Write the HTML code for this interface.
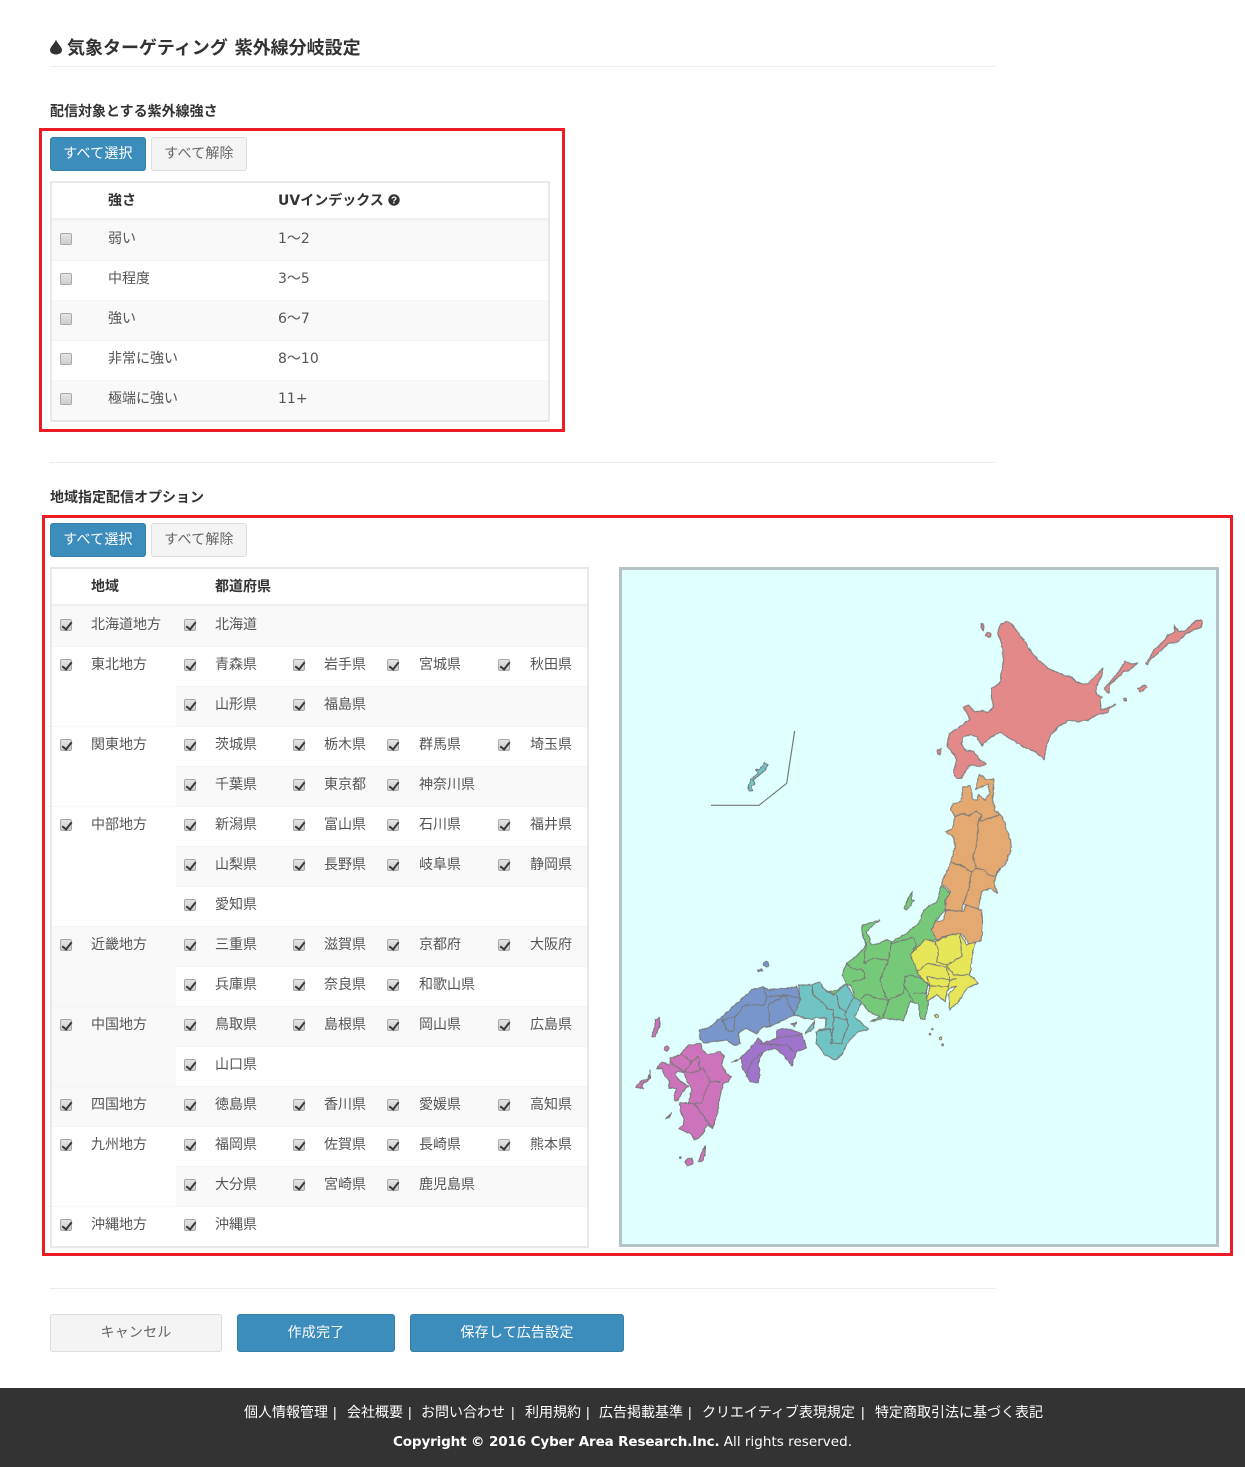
<!DOCTYPE html>
<html lang="ja"><head><meta charset="utf-8"><title>紫外線分岐設定</title>
<style>
*{box-sizing:border-box}
html,body{margin:0;padding:0;background:#fff}
body{position:relative;width:1245px;height:1467px;overflow:hidden;font:14px/20px "Liberation Sans","Noto Sans CJK JP",sans-serif;color:#555}
.a{position:absolute;white-space:nowrap}
.hr{position:absolute;left:50px;width:946px;height:1px;background:#eee}
.h{font-weight:700;color:#333}
.b{position:absolute;height:34px;line-height:31px;text-align:center;border-radius:3px;border:1px solid #367fa9;background:#3c8dbc;color:#fff;letter-spacing:.2px}
.g{background:#f4f4f4;border-color:#ddd;color:#666}
.red{position:absolute;border:3px solid #ed1c24}
table{position:absolute;border-collapse:separate;border-spacing:0;table-layout:fixed;border:2px solid #e8e8e8;background:#fff}
td,th{height:40px;padding:0 0 6px 10px;border-top:1px solid #f4f4f4;text-align:left;vertical-align:middle;white-space:nowrap;font-weight:400;overflow:hidden}
th{height:37px;border-top:0;border-bottom:2px solid #f0f0f0;font-weight:700;color:#333;padding-bottom:1px}
td.k{padding:0 0 3px 8px;vertical-align:middle}
td.n{font-family:"DejaVu Sans","Noto Sans CJK JP",sans-serif;padding-bottom:4px}
tr.s td{background:#f9f9f9}
i.c{display:block;position:relative;width:12px;height:12px;border:1px solid #a8a8a8;border-radius:2px;background:linear-gradient(#e4e4e4,#cfcfcf)}
i.y::after{content:"";position:absolute;left:3px;top:0;width:4px;height:8px;border:solid #3a3a3a;border-width:0 2px 2px 0;transform:rotate(38deg)}
#foot{position:absolute;left:0;top:1388px;width:1245px;height:79px;background:#333;color:#fff}
#foot span{position:absolute;top:14px;white-space:nowrap}
#foot span span{position:static}
</style></head><body>

<svg class="a" style="left:49px;top:39px" width="14" height="16" viewBox="0 0 14 16"><path d="M7 .5C6 4.500 1 7.500 1 11c0 2.700 2.700 4.500 6 4.500s6-1.800 6-4.500C13 7.500 8 4.500 7 .5Z" fill="#333"/></svg>
<div class="a h" style="left:67px;top:36px;font-size:18px;line-height:24px;word-spacing:2px;letter-spacing:-.02px">気象ターゲティング 紫外線分岐設定</div>
<div class="hr" style="top:66px"></div>

<div class="a h" style="left:50px;top:101px">配信対象とする紫外線強さ</div>
<div class="red" style="left:39px;top:128px;width:526px;height:304px"></div>
<div class="b" style="left:50px;top:137px;width:96px">すべて選択</div>
<div class="b g" style="left:151px;top:137px;width:96px">すべて解除</div>

<table style="left:50px;top:181px;width:500px">
<colgroup><col style="width:46px"><col style="width:170px"><col></colgroup>
<tr><th style="padding:0"></th><th>強さ</th><th><span style="font-family:'DejaVu Sans',sans-serif">UV</span>インデックス <svg width="12" height="12" viewBox="0 0 12 12" style="vertical-align:-1px"><circle cx="6" cy="6" r="5.700" fill="#333"/><text x="6" y="9.500" font-size="10" font-weight="700" fill="#fff" text-anchor="middle" font-family="Liberation Sans">?</text></svg></th></tr>
<tr class="s"><td class="k"><i class="c"></i></td><td>弱い</td><td class="n">1～2</td></tr>
<tr><td class="k"><i class="c"></i></td><td>中程度</td><td class="n">3～5</td></tr>
<tr class="s"><td class="k"><i class="c"></i></td><td>強い</td><td class="n">6～7</td></tr>
<tr><td class="k"><i class="c"></i></td><td>非常に強い</td><td class="n">8～10</td></tr>
<tr class="s"><td class="k"><i class="c"></i></td><td>極端に強い</td><td class="n">11+</td></tr>
</table>

<div class="hr" style="top:462px"></div>
<div class="a h" style="left:50px;top:487px">地域指定配信オプション</div>
<div class="red" style="left:42px;top:515px;width:1191px;height:741px"></div>
<div class="b" style="left:50px;top:523px;width:96px">すべて選択</div>
<div class="b g" style="left:151px;top:523px;width:96px">すべて解除</div>

<table style="left:50px;top:567px;width:539px">
<colgroup><col style="width:29px"><col style="width:95px"><col style="width:29px"><col style="width:80px"><col style="width:29px"><col style="width:65px"><col style="width:30px"><col style="width:81px"><col style="width:30px"><col></colgroup>
<tr><th style="padding:0"></th><th>地域</th><th style="padding:0"></th><th colspan="7">都道府県</th></tr>
<tr class="s"><td class="k"><i class="c y"></i></td><td>北海道地方</td><td class="k"><i class="c y"></i></td><td colspan="7">北海道</td></tr>

<tr><td class="k" rowspan="2" style="vertical-align:top;padding-top:12px"><i class="c y"></i></td><td rowspan="2" style="vertical-align:top;padding-top:7px">東北地方</td><td class="k"><i class="c y"></i></td><td>青森県</td><td class="k"><i class="c y"></i></td><td>岩手県</td><td class="k"><i class="c y"></i></td><td>宮城県</td><td class="k"><i class="c y"></i></td><td>秋田県</td></tr>
<tr class="s"><td class="k"><i class="c y"></i></td><td>山形県</td><td class="k"><i class="c y"></i></td><td>福島県</td><td></td><td></td><td></td><td></td></tr>

<tr><td class="k" rowspan="2" style="vertical-align:top;padding-top:12px"><i class="c y"></i></td><td rowspan="2" style="vertical-align:top;padding-top:7px">関東地方</td><td class="k"><i class="c y"></i></td><td>茨城県</td><td class="k"><i class="c y"></i></td><td>栃木県</td><td class="k"><i class="c y"></i></td><td>群馬県</td><td class="k"><i class="c y"></i></td><td>埼玉県</td></tr>
<tr class="s"><td class="k"><i class="c y"></i></td><td>千葉県</td><td class="k"><i class="c y"></i></td><td>東京都</td><td class="k"><i class="c y"></i></td><td>神奈川県</td><td></td><td></td></tr>

<tr><td class="k" rowspan="3" style="vertical-align:top;padding-top:12px"><i class="c y"></i></td><td rowspan="3" style="vertical-align:top;padding-top:7px">中部地方</td><td class="k"><i class="c y"></i></td><td>新潟県</td><td class="k"><i class="c y"></i></td><td>富山県</td><td class="k"><i class="c y"></i></td><td>石川県</td><td class="k"><i class="c y"></i></td><td>福井県</td></tr>
<tr class="s"><td class="k"><i class="c y"></i></td><td>山梨県</td><td class="k"><i class="c y"></i></td><td>長野県</td><td class="k"><i class="c y"></i></td><td>岐阜県</td><td class="k"><i class="c y"></i></td><td>静岡県</td></tr>
<tr><td class="k"><i class="c y"></i></td><td>愛知県</td><td></td><td></td><td></td><td></td><td></td><td></td></tr>

<tr class="s"><td class="k" rowspan="2" style="vertical-align:top;padding-top:12px"><i class="c y"></i></td><td rowspan="2" style="vertical-align:top;padding-top:7px">近畿地方</td><td class="k"><i class="c y"></i></td><td>三重県</td><td class="k"><i class="c y"></i></td><td>滋賀県</td><td class="k"><i class="c y"></i></td><td>京都府</td><td class="k"><i class="c y"></i></td><td>大阪府</td></tr>
<tr><td class="k"><i class="c y"></i></td><td>兵庫県</td><td class="k"><i class="c y"></i></td><td>奈良県</td><td class="k"><i class="c y"></i></td><td>和歌山県</td><td></td><td></td></tr>

<tr class="s"><td class="k" rowspan="2" style="vertical-align:top;padding-top:12px"><i class="c y"></i></td><td rowspan="2" style="vertical-align:top;padding-top:7px">中国地方</td><td class="k"><i class="c y"></i></td><td>鳥取県</td><td class="k"><i class="c y"></i></td><td>島根県</td><td class="k"><i class="c y"></i></td><td>岡山県</td><td class="k"><i class="c y"></i></td><td>広島県</td></tr>
<tr><td class="k"><i class="c y"></i></td><td>山口県</td><td></td><td></td><td></td><td></td><td></td><td></td></tr>

<tr class="s"><td class="k"><i class="c y"></i></td><td>四国地方</td><td class="k"><i class="c y"></i></td><td>徳島県</td><td class="k"><i class="c y"></i></td><td>香川県</td><td class="k"><i class="c y"></i></td><td>愛媛県</td><td class="k"><i class="c y"></i></td><td>高知県</td></tr>

<tr><td class="k" rowspan="2" style="vertical-align:top;padding-top:12px"><i class="c y"></i></td><td rowspan="2" style="vertical-align:top;padding-top:7px">九州地方</td><td class="k"><i class="c y"></i></td><td>福岡県</td><td class="k"><i class="c y"></i></td><td>佐賀県</td><td class="k"><i class="c y"></i></td><td>長崎県</td><td class="k"><i class="c y"></i></td><td>熊本県</td></tr>
<tr class="s"><td class="k"><i class="c y"></i></td><td>大分県</td><td class="k"><i class="c y"></i></td><td>宮崎県</td><td class="k"><i class="c y"></i></td><td>鹿児島県</td><td></td><td></td></tr>

<tr><td class="k"><i class="c y"></i></td><td>沖縄地方</td><td class="k"><i class="c y"></i></td><td colspan="7">沖縄県</td></tr>
</table>

<div class="a" style="left:619px;top:567px;width:600px;height:680px;background:#e0ffff;border:3px solid #b4c4c4"></div>
<svg class="a" style="left:0;top:0" width="1245" height="1467" viewBox="0 0 1245 1467" stroke="#777" stroke-linejoin="round">
<defs><filter id="r" filterUnits="userSpaceOnUse" x="620" y="600" width="596" height="600"><feTurbulence type="fractalNoise" baseFrequency=".22" numOctaves="2" seed="4"/><feDisplacementMap in="SourceGraphic" scale="2.500" xChannelSelector="R" yChannelSelector="G"/></filter></defs>
<g transform="translate(700 720) scale(.3333)">
<path d="M33 256H177L260 190L284 33" fill="none" stroke-width="3.500"/>
</g>
<g filter="url(#r)">
<g transform="translate(700 720) scale(.3333)">
<path d="M195 128L203 135L195 150L180 165L165 175L160 180L165 190L155 200L158 212L148 213L145 200L155 175L175 160L165 150L178 148Z" fill="#70c4c4" stroke-width="3"/>
</g>
<g transform="translate(920 600) scale(.3333)" stroke-width="3">
<g fill="#e38989">
<path d="M263 63L285 85L318 130L345 170L385 205L430 225L458 232L470 247L502 252L530 225L549 203L545 225L528 262L530 283L548 293L540 300L545 330L565 322L588 313L570 325L562 338L530 345L505 360L470 365L445 362L415 380L390 410L378 445L373 478L350 458L310 440L265 412L240 398L215 410L185 436L170 410L150 404L130 412L123 430L135 450L160 455L180 480L200 492L178 500L150 495L135 515L125 535L108 535L100 515L110 480L100 460L82 440L88 400L120 380L150 357L130 322L145 315L165 335L185 332L205 338L220 320L215 285L215 265L240 250L250 180L245 130L233 100L240 75Z"/>
<path d="M555 265L575 240L600 210L615 183L635 192L652 190L630 210L610 215L590 235L570 255L567 280L555 270Z"/>
<path d="M677 188L695 165L700 150L725 130L745 105L765 95L763 75L775 95L800 90L830 60L848 62L845 80L800 100L770 128L745 130L720 155L690 180L682 192Z"/>
<path d="M653 265L675 255L682 262L660 277Z"/>
<circle cx="615" cy="299" r="4"/><circle cx="205" cy="104" r="8"/>
<path d="M183 70L190 72L190 92L185 90Z"/><path d="M52 450L65 445L60 465L53 462Z"/>
</g>
<g fill="#e4a96f">
<path d="M178 523L200 540L222 537L218 590L225 632L240 643L210 655L180 665L185 645L170 635L145 647L125 640L105 650L92 630L100 610L122 605L130 560L150 558L160 600L172 600L175 585L195 600L208 580L205 553L190 557L167 568Z"/>
<path d="M240 643L255 665L258 685L268 710L275 740L265 770L255 795L240 805L225 828L205 825L195 810L168 805L158 770L170 730L175 665L210 655Z"/>
<path d="M105 650L125 640L145 647L170 635L185 645L175 665L170 730L158 770L168 805L155 815L120 795L92 787L105 740L100 710L75 695L95 688Z"/>
<path d="M168 805L195 810L205 825L225 828L240 805L228 830L222 850L232 880L210 865L185 875L175 925L160 930L130 910L145 870L155 815Z"/>
<path d="M92 787L120 795L155 815L145 870L130 910L125 935L100 935L75 928L80 880L92 875L65 850Z"/>
</g>
</g>
<g transform="translate(620 880) scale(.3333)" stroke-width="3">
<path d="M935 150L945 125L970 120L978 90L1030 95L1040 75L1085 90L1088 130L1085 180L1050 195L1025 160L985 165L950 180Z" fill="#e4a96f"/>
<g fill="#74c978">
<path d="M965 15L990 40L975 60L975 90L945 125L935 150L950 180L915 180L870 225L890 260L895 285L925 310L918 340L925 375L915 420L900 415L895 370L870 365L850 422L790 415L752 425L780 410L745 395L735 378L705 355L695 320L680 310L665 285L680 250L700 235L728 210L738 190L725 160L728 135L780 120L755 140L740 155L755 195L780 190L795 180L815 185L860 160L900 125L910 90L950 65Z"/>
<path d="M852 85L865 55L878 35L875 60L882 62L860 90Z"/>
<path d="M625 335L650 330L680 310L690 330L650 345Z"/>
<path d="M738 190L732 250L760 235L805 240L780 300L795 345L805 360L770 355L740 342L722 355M680 250L695 265L730 270L735 295L695 305M815 185L805 240M815 190L880 172L890 195L870 225M805 360L850 340L855 290L870 285L905 295L925 310M855 320L880 365M918 340L880 340M805 360L790 415" fill="none"/>
</g>
<path d="M915 178L945 185L990 165L1020 160L1040 195L1065 185L1055 240L1050 285L1075 310L1040 325L1015 365L990 390L985 345L1010 318L985 325L975 365L950 345L920 365L930 318L895 285L888 260L870 225Z" fill="#e6e658"/>
<path d="M945 185L955 215L950 245L980 255L1025 230L1020 160M1025 230L980 255L1000 285L1050 285M890 275L925 250L980 262L990 300L920 290M920 290L930 318L985 320L990 300M1010 295L990 300" fill="none"/>
<g fill="#e6e658"><circle cx="950" cy="408" r="5"/><circle cx="962" cy="475" r="4"/><circle cx="938" cy="447" r="2.500"/><circle cx="930" cy="461" r="2.500"/><circle cx="968" cy="495" r="2.500"/></g>
<path d="M535 315L575 315L600 305L610 325L640 345L680 310L700 350L725 365L705 410L745 448L715 455L690 480L660 530L645 540L615 525L590 490L588 455L615 445L620 415L590 412L575 420L525 405L520 395L540 355Z" fill="#70c4c4"/>
<path d="M555 463L570 440L585 422L580 445Z" fill="#70c4c4"/>
<path d="M575 315L580 345L615 375L620 385L640 390L640 450L612 445M650 345L660 385L680 395L675 400L685 435L665 490L632 490L640 450M640 410L680 420M700 355L675 400M590 455L630 447L640 490" fill="none"/>
<path d="M430 320L445 330L530 320L542 355L522 405L450 440L430 440L410 460L375 445L355 460L360 490L345 498L320 480L285 485L250 490L240 478L238 450L270 442L300 415L350 370L395 330Z" fill="#7896cc"/>
<path d="M430 320L440 350L435 375L375 375L345 410L310 420L305 420L320 450L340 455M345 410L340 450M440 350L495 345L542 355M445 375L495 345L522 405M445 375L450 438" fill="none"/>
<g fill="#7896cc"><circle cx="438" cy="253" r="8"/><path d="M412 270L425 265L428 272L415 275Z"/></g>
<path d="M470 450L500 445L545 460L560 505L530 515L515 558L490 525L465 505L430 515L415 550L420 585L415 608L390 605L385 590L370 570L362 535L395 500L415 475L430 488L470 475Z" fill="#a073cc"/>
<path d="M470 475L500 470L545 465M470 495L500 495L520 515M430 515L400 540L385 565L380 590M415 490L470 495" fill="none"/>
<path d="M335 547L362 535L345 545Z" fill="#a073cc"/>
<path d="M512 432L530 428L525 440Z" fill="#a073cc"/>
<g fill="#cc73bb">
<path d="M205 495L240 490L250 515L262 525L300 515L312 530L305 555L320 580L335 590L325 605L310 610L300 650L292 700L278 745L262 735L250 760L235 775L222 780L217 765L195 755L175 745L190 735L192 718L180 690L180 668L205 670L215 628L200 600L192 578L172 574L166 580L172 598L192 610L205 618L185 640L178 655L165 665L160 650L170 625L145 625L150 605L135 590L125 565L110 565L125 545L148 555L150 535L180 525Z"/>
<path d="M95 470L105 440L105 420L120 412L118 440L105 470Z"/><circle cx="140" cy="505" r="7"/>
<path d="M47 622L60 605L85 595L92 570L90 595L65 615L70 625Z"/><path d="M137 718L155 697L150 710Z"/>
<path d="M235 845L245 820L255 798L255 825L245 845Z"/><circle cx="208" cy="846" r="11"/><circle cx="181" cy="833" r="2.500"/>
<path d="M180 520L215 545L195 575L215 580L250 565L270 605L300 605M270 605L250 650L245 670L205 670M215 545L235 530L240 570M222 672L260 720L278 745M150 545L190 575L195 575" fill="none"/>
</g>
</g>
</g>
</svg>

<div class="hr" style="top:1288px"></div>
<div class="b g" style="left:50px;top:1314px;width:172px;height:38px;line-height:35px">キャンセル</div>
<div class="b" style="left:237px;top:1314px;width:158px;height:38px;line-height:35px">作成完了</div>
<div class="b" style="left:410px;top:1314px;width:214px;height:38px;line-height:35px">保存して広告設定</div>

<div id="foot">
<span style="left:244px">個人情報管理</span><span style="left:333px">|</span>
<span style="left:347px">会社概要</span><span style="left:408px">|</span>
<span style="left:421px">お問い合わせ</span><span style="left:511px">|</span>
<span style="left:525px">利用規約</span><span style="left:586px">|</span>
<span style="left:599px">広告掲載基準</span><span style="left:688px">|</span>
<span style="left:702px">クリエイティブ表現規定</span><span style="left:861px">|</span>
<span style="left:875px">特定商取引法に基づく表記</span>
<span style="left:393px;top:44px;width:470px;font-family:'DejaVu Sans',sans-serif;font-size:13.500px"><b style="letter-spacing:-.13px">Copyright © 2016 Cyber Area Research.Inc.</b> <span style="letter-spacing:.03px">All rights reserved.</span></span>
</div>
</body></html>
